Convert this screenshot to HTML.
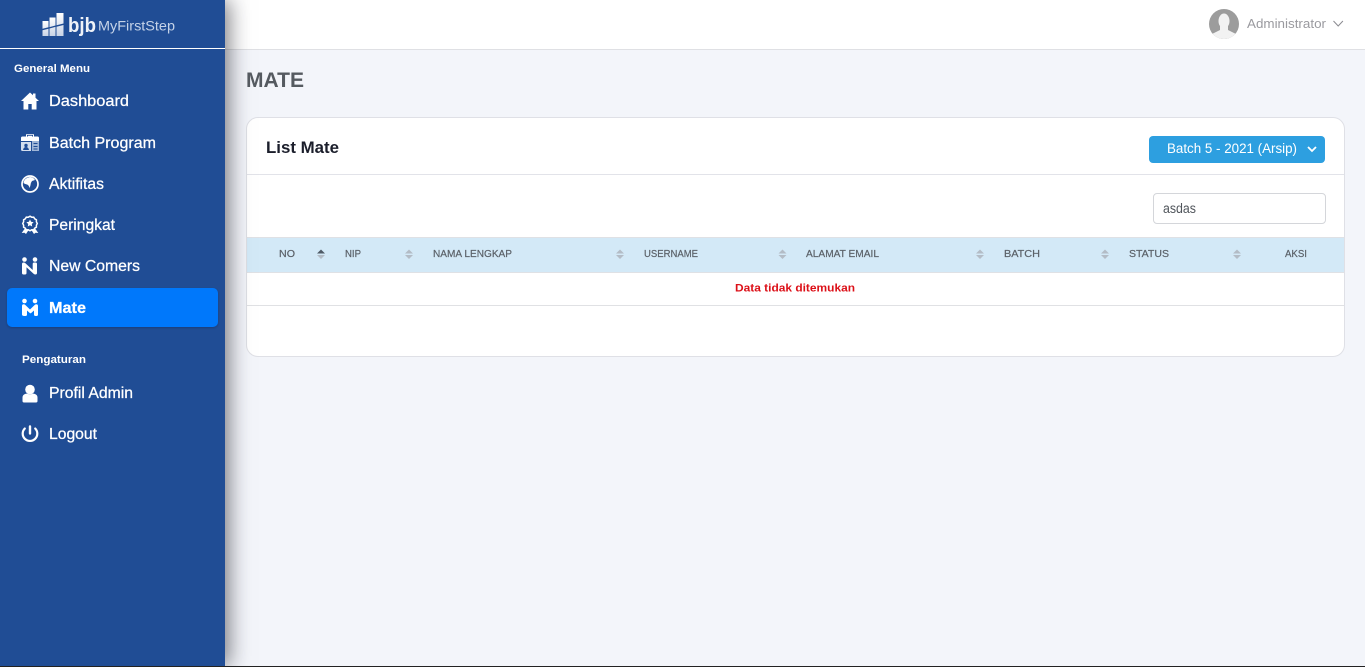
<!DOCTYPE html>
<html lang="id">
<head>
<meta charset="utf-8">
<title>MATE</title>
<style>
html,body{margin:0;padding:0;width:1365px;height:667px;overflow:hidden;background:#f3f5fa;font-family:"Liberation Sans",sans-serif}
.abs{position:absolute}
#top{left:225px;top:0;width:1140px;height:49px;background:#fff;border-bottom:1px solid #dfe0e4}
#side{left:0;top:0;width:225px;height:666px;background:#204d95;box-shadow:4px 0 20px rgba(20,20,30,.55)}
#sideline{left:0;top:48px;width:225px;height:1px;background:#fff}
#active{left:7px;top:288px;width:211px;height:39px;background:#0078fb;border-radius:5px;box-shadow:0 1px 2px rgba(0,0,0,.2)}
#bottom{left:0;top:666px;width:1365px;height:1px;background:#222}
#card{left:246px;top:117px;width:1097px;height:238px;background:#fff;border:1px solid #dfe0e6;border-radius:12px}
#hline{left:247px;top:174px;width:1097px;height:1px;background:#e2e3e9}
#btn{left:1149px;top:136px;width:176px;height:27px;background:#2d9fe0;border-radius:4px}
#inp{left:1153px;top:193px;width:171px;height:29px;border:1px solid #d4d6da;border-radius:4px;background:#fff}
#th1{left:247px;top:237px;width:1097px;height:1px;background:#dfe1e5}
#thead{left:247px;top:238px;width:1097px;height:34px;background:#d3e9f7}
#th2{left:247px;top:272px;width:1097px;height:1px;background:#dfe1e5}
#rowline{left:247px;top:305px;width:1097px;height:1px;background:#e0e1e4}
svg{position:absolute;left:0;top:0}
text{font-family:"Liberation Sans",sans-serif}
.m{fill:#fff;font-size:15.5px;stroke:#fff;stroke-width:.25px}
.b{fill:#fff;font-size:11px;font-weight:700}
.h{fill:#5b6168;font-size:10.5px;stroke:#5b6168;stroke-width:.2px}
.su{fill:#b3bcc6}
</style>
</head>
<body>
<div class="abs" id="top"></div>
<div class="abs" id="card"></div>
<div class="abs" id="hline"></div>
<div class="abs" id="btn"></div>
<div class="abs" id="inp"></div>
<div class="abs" id="th1"></div>
<div class="abs" id="thead"></div>
<div class="abs" id="th2"></div>
<div class="abs" id="rowline"></div>
<div class="abs" id="side"></div>
<div class="abs" id="sideline"></div>
<div class="abs" id="active"></div>
<div class="abs" id="bottom"></div>

<svg width="1365" height="667" viewBox="0 0 1365 667" xmlns="http://www.w3.org/2000/svg">
  <defs>
    <linearGradient id="lg" x1="0" y1="0" x2="0" y2="1">
      <stop offset="0" stop-color="#fff"/>
      <stop offset="1" stop-color="#c9d4e6"/>
    </linearGradient>
  </defs>
  <!-- logo -->
  <g fill="url(#lg)">
    <path d="M42.500 21h6v6.200l-6 1.600zM42.500 30.300l6-1.600V36h-6z"/>
    <path d="M49.500 17.500h6v8l-6 1.600zM49.500 28.500l6-1.600V36h-6z"/>
    <path d="M56.500 13h7v10.500l-7 1.800zM56.500 26.800l7-1.800V36h-7z"/>
  </g>
  <text x="68" y="32" font-size="20" font-weight="700" fill="#eef2f8" textLength="28" lengthAdjust="spacingAndGlyphs">bjb</text>
  <text x="98" y="30.500" font-size="13.5" fill="#c5d3e8" textLength="77" lengthAdjust="spacingAndGlyphs">MyFirstStep</text>

  <!-- sidebar text -->
  <text class="b" x="14" y="72" textLength="76" lengthAdjust="spacingAndGlyphs">General Menu</text>
  <text class="m" x="49" y="106" textLength="80" lengthAdjust="spacingAndGlyphs">Dashboard</text>
  <text class="m" x="49" y="148" textLength="107" lengthAdjust="spacingAndGlyphs">Batch Program</text>
  <text class="m" x="49" y="189" textLength="55" lengthAdjust="spacingAndGlyphs">Aktifitas</text>
  <text class="m" x="49" y="230" textLength="66" lengthAdjust="spacingAndGlyphs">Peringkat</text>
  <text class="m" x="49" y="271" textLength="91" lengthAdjust="spacingAndGlyphs">New Comers</text>
  <text class="m" x="49" y="313" font-weight="700" textLength="37" lengthAdjust="spacingAndGlyphs">Mate</text>
  <text class="b" x="22" y="363" textLength="64" lengthAdjust="spacingAndGlyphs">Pengaturan</text>
  <text class="m" x="49" y="398" textLength="84" lengthAdjust="spacingAndGlyphs">Profil Admin</text>
  <text class="m" x="49" y="439" textLength="48" lengthAdjust="spacingAndGlyphs">Logout</text>

  <!-- home -->
  <path fill="#fff" d="M30 92.500L21 101h2.500v8.500h4.800v-5.500h3.400v5.500h4.800V101H39l-3.500-3.300V93.500h-2.500v1.800z"/>
  <!-- briefcase -->
  <path fill="#fff" d="M21 138q0-1.500 1.500-1.500H26v-1.500q0-1 1-1h6q1 0 1 1v1.500h3.500q1.500 0 1.500 1.500v3H21z"/>
  <path fill="none" stroke="#204d95" stroke-width="1" d="M27.500 136.500v-1.300h5v1.300"/>
  <path fill="#d3deee" d="M21 142h10v9h-8.500q-1.500 0-1.500-1.500z"/>
  <circle cx="26" cy="145.500" r="1.700" fill="#204d95"/>
  <path fill="#204d95" d="M23 150q.5-3 3-3t3 3z"/>
  <path fill="#9fb5d6" d="M32 141h7v10h-7z"/>
  <path fill="#204d95" d="M33.500 143h4v1h-4zM33.500 146h4v1h-4zM33.500 148.500h4v1h-4z"/>
  <!-- aktifitas -->
  <circle cx="30" cy="184" r="8" fill="none" stroke="#fff" stroke-width="1.700"/>
  <path fill="#fff" d="M23.500 183q.5-5 6.500-6 3.500 0 5 3l-3 1q-1.500 2-1.500 4l-.8 3q-1-3-2.700-3.500-2.500-.5-3.500-1.500z"/>
  <!-- peringkat -->
  <path fill="none" stroke="#fff" stroke-width="1.500" d="M30 216.200l1.700 1 2-.1 1 1.700 1.700 1 0 2 .9 1.700-.9 1.700 0 2-1.700 1-1 1.700-2-.1-1.700 1-1.700-1-2 .1-1-1.700-1.700-1 0-2-.9-1.700.9-1.700 0-2 1.700-1 1-1.700 2 .1z"/>
  <path fill="#fff" d="M30 219.500l1.100 2.300 2.500.4-1.800 1.800.4 2.500-2.200-1.200-2.200 1.200.4-2.500-1.800-1.800 2.500-.4z"/>
  <path fill="#fff" d="M24.500 229l-2.800 4 2.800-.2 1.500 1.200 2.300-3.500zM35.500 229l2.800 4-2.800-.2-1.500 1.200-2.300-3.500z"/>
  <!-- new comers -->
  <g fill="#fff">
    <circle cx="24.500" cy="259.500" r="2.300"/><circle cx="35" cy="259.500" r="2.300"/>
    <path d="M22 264q0-1.500 1.700-1.500 1.200 0 2 1l7 6.500V264q0-1.500 1.500-1.500h1.300q1.500 0 1.500 1.500v9q0 1.500-1.700 1.500-1.200 0-2-1l-6.800-6.300V273q0 1.500-1.500 1.500h-1.500Q22 274.500 22 273z"/>
  </g>
  <!-- mate -->
  <g fill="#fff">
    <circle cx="24.500" cy="301" r="2.300"/><circle cx="35" cy="301" r="2.300"/>
    <path d="M22 306q0-1.700 1.800-1.700 1 0 1.800 1l4.400 4.200 4.400-4.200q.8-1 1.800-1 1.800 0 1.800 1.700v8.500q0 1.500-1.500 1.500h-1q-1.500 0-1.500-1.500v-4l-2.800 2.500q-.7.600-1.400 0l-2.800-2.500v4q0 1.500-1.500 1.500h-1Q22 316 22 314.500z"/>
  </g>
  <!-- profil -->
  <circle cx="30" cy="389.500" r="4.800" fill="#fff"/>
  <path fill="#fff" d="M22.500 401v-3.500q0-2.500 2.500-3.500l2-.5q3 1.500 6 0l2 .5q2.500 1 2.500 3.500v3.500q0 1.500-1.500 1.500H24q-1.500 0-1.500-1.500z"/>
  <!-- logout -->
  <path fill="none" stroke="#fff" stroke-width="2.200" stroke-linecap="round" d="M24.800 428.500a7.300 7.300 0 1 0 10.400 0"/>
  <path fill="none" stroke="#fff" stroke-width="2.400" stroke-linecap="round" d="M30 426.500v7"/>

  <!-- top bar -->
  <clipPath id="av"><circle cx="1224" cy="24" r="15"/></clipPath>
  <circle cx="1224" cy="24" r="15" fill="#9c9c9c"/>
  <g clip-path="url(#av)" fill="#f2f2f2">
    <ellipse cx="1224" cy="21" rx="5.500" ry="7.500"/>
    <path d="M1220 26h8v4l7 3.500q3 1.500 3 6.500h-28q0-5 3-6.500l7-3.500z"/>
  </g>
  <text x="1247" y="28" font-size="13" fill="#9a9a9f" textLength="79" lengthAdjust="spacingAndGlyphs">Administrator</text>
  <path fill="none" stroke="#8a8a90" stroke-width="1" d="M1333.500 21l4.700 5 4.700-5"/>

  <!-- headings -->
  <text x="246" y="87" font-size="21.500" font-weight="700" fill="#555a60" textLength="58" lengthAdjust="spacingAndGlyphs">MATE</text>
  <text x="266" y="153" font-size="16.500" font-weight="700" fill="#1b1e2b" textLength="73" lengthAdjust="spacingAndGlyphs">List Mate</text>

  <!-- button -->
  <text x="1167" y="153" font-size="13.500" fill="#fff" textLength="130" lengthAdjust="spacingAndGlyphs">Batch 5 - 2021 (Arsip)</text>
  <path fill="none" stroke="#fff" stroke-width="1.800" d="M1308 147l4 4 4-4"/>

  <!-- input -->
  <text x="1163" y="213" font-size="13.500" fill="#50555b" textLength="33" lengthAdjust="spacingAndGlyphs">asdas</text>

  <!-- table header -->
  <text class="h" x="279" y="257" textLength="16" lengthAdjust="spacingAndGlyphs">NO</text>
  <text class="h" x="345" y="257" textLength="16" lengthAdjust="spacingAndGlyphs">NIP</text>
  <text class="h" x="433" y="257" textLength="79" lengthAdjust="spacingAndGlyphs">NAMA LENGKAP</text>
  <text class="h" x="644" y="257" textLength="54" lengthAdjust="spacingAndGlyphs">USERNAME</text>
  <text class="h" x="806" y="257" textLength="73" lengthAdjust="spacingAndGlyphs">ALAMAT EMAIL</text>
  <text class="h" x="1004" y="257" textLength="36" lengthAdjust="spacingAndGlyphs">BATCH</text>
  <text class="h" x="1129" y="257" textLength="40" lengthAdjust="spacingAndGlyphs">STATUS</text>
  <text class="h" x="1285" y="257" textLength="22" lengthAdjust="spacingAndGlyphs">AKSI</text>

  <!-- sort icons -->
  <path fill="#4f5a66" d="M317 253.500l4-4 4 4z"/>
  <path class="su" d="M317 255h8l-4 4z"/>
  <g class="su">
    <path d="M405 253.500l4-4 4 4zM405 255h8l-4 4z"/>
    <path d="M616 253.500l4-4 4 4zM616 255h8l-4 4z"/>
    <path d="M778.500 253.500l4-4 4 4zM778.500 255h8l-4 4z"/>
    <path d="M976 253.500l4-4 4 4zM976 255h8l-4 4z"/>
    <path d="M1101 253.500l4-4 4 4zM1101 255h8l-4 4z"/>
    <path d="M1233 253.500l4-4 4 4zM1233 255h8l-4 4z"/>
  </g>

  <!-- empty row -->
  <text x="735" y="291.500" font-size="11" font-weight="700" fill="#dc1018" textLength="120" lengthAdjust="spacingAndGlyphs">Data tidak ditemukan</text>
</svg>
</body>
</html>
